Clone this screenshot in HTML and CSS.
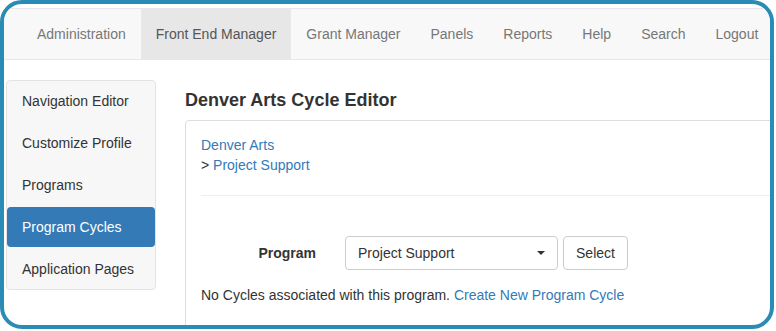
FILE: index.html
```html
<!DOCTYPE html>
<html lang="en">
<head>
  <meta charset="UTF-8" />
  <title>Denver Arts Cycle Editor</title>
  <link rel="stylesheet" href="styles.css">
</head>
<body>
  <div class="frame">
    <!-- Top navigation -->
    <div class="navbar">
      <ul class="nav">
        <li><a href="#">Administration</a></li>
        <li class="active"><a href="#">Front End Manager</a></li>
        <li><a href="#">Grant Manager</a></li>
        <li><a href="#">Panels</a></li>
        <li><a href="#">Reports</a></li>
        <li><a href="#">Help</a></li>
        <li><a href="#">Search</a></li>
        <li><a href="#">Logout</a></li>
      </ul>
    </div>

    <div class="content">
      <!-- Side menu -->
      <ul class="sidebar">
        <li><a href="#">Navigation Editor</a></li>
        <li><a href="#">Customize Profile</a></li>
        <li><a href="#">Programs</a></li>
        <li class="active"><a href="#">Program Cycles</a></li>
        <li><a href="#">Application Pages</a></li>
      </ul>

      <div class="main">
        <h4>Denver Arts Cycle Editor</h4>
        <div class="panel">
          <div class="crumbs">
            <a href="#">Denver Arts</a><br>
            &gt; <a href="#">Project Support</a>
          </div>
          <hr>
          <div class="form-row">
            <label for="program">Program</label>
            <div class="select" id="program">
              <span>Project Support</span>
              <span class="caret"></span>
            </div>
            <button>Select</button>
          </div>
          <p class="note">No Cycles associated with this program. <a href="#">Create New Program Cycle</a></p>
        </div>
      </div>
    </div>
  </div>
</body>
</html>
```

FILE: styles.css
```css
body {
  margin: 0;
  background: #fff;
  font-family: "Liberation Sans", Arial, sans-serif;
  font-size: 14px;
  line-height: 20px;
  color: #333;
}
a {
  color: #337ab7;
  text-decoration: none;
}
ul {
  list-style: none;
  margin: 0;
  padding: 0;
}
.frame {
  width: 774px;
  height: 329px;
  box-sizing: border-box;
  border: 4px solid #2a8bb5;
  border-radius: 22px;
  overflow: hidden;
  padding-top: 4px;
}
.navbar {
  background: #f8f8f8;
  border-top: 1px solid #e7e7e7;
  border-bottom: 1px solid #e7e7e7;
  height: 50px;
  padding-left: 18px;
}
.nav {
  display: flex;
  white-space: nowrap;
}
.nav a {
  display: block;
  padding: 15px;
  color: #777;
}
.nav .active a {
  background: #e7e7e7;
  color: #555;
}
.content {
  display: flex;
  align-items: flex-start;
  margin-top: 20px;
}
.sidebar {
  width: 150px;
  flex: none;
  box-sizing: border-box;
  margin-left: 2px;
  background: #f7f7f7;
  border: 1px solid #e3e3e3;
  border-radius: 4px;
}
.sidebar li + li {
  margin-top: 2px;
}
.sidebar a {
  display: block;
  padding: 10px 15px;
  color: #333;
  border-radius: 4px;
}
.sidebar .active a {
  background: #337ab7;
  color: #fff;
}
.main {
  margin-left: 29px;
  width: 700px;
  flex: none;
}
h4 {
  margin: 10px 0;
  font-size: 18px;
  line-height: 20px;
  font-weight: bold;
  color: #333;
}
.panel {
  border: 1px solid #ddd;
  border-radius: 4px;
  padding: 14px 15px 15px;
  height: 300px;
}
hr {
  margin: 20px 0;
  border: 0;
  border-top: 1px solid #eee;
}
.form-row {
  display: flex;
  align-items: center;
  margin-top: 40px;
}
.form-row label {
  width: 115px;
  text-align: right;
  font-weight: bold;
  line-height: 34px;
}
.select {
  margin-left: 29px;
  width: 213px;
  height: 34px;
  box-sizing: border-box;
  border: 1px solid #ccc;
  border-radius: 4px;
  padding: 6px 12px;
  display: flex;
  justify-content: space-between;
  align-items: center;
  color: #333;
}
.caret {
  width: 0;
  height: 0;
  border-left: 4px solid transparent;
  border-right: 4px solid transparent;
  border-top: 4px solid #333;
}
button {
  margin-left: 5px;
  width: 65px;
  height: 34px;
  background: #fff;
  border: 1px solid #ccc;
  border-radius: 4px;
  font-family: inherit;
  font-size: 14px;
  color: #333;
  padding: 0;
}
.note {
  margin: 15px 0 0;
}
```
